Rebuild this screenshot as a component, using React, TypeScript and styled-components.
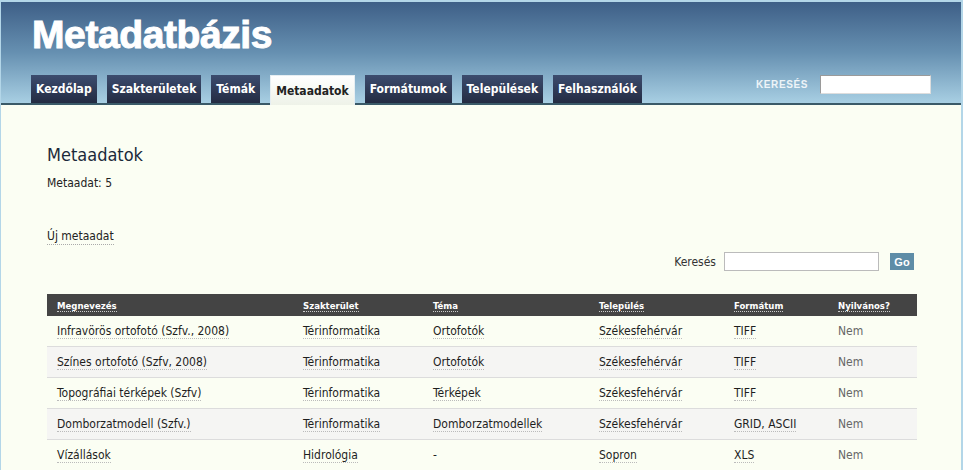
import * as React from 'react';
import styled, { createGlobalStyle } from 'styled-components';

const GlobalStyle = createGlobalStyle`
  html, body {
    margin: 0;
    padding: 0;
    background-color: #b3d6e8;
  }
  body {
    font-family: "DejaVu Sans Condensed", "Liberation Sans", Arial, sans-serif;
    color: #222;
  }
`;

const Page = styled.div`
  margin: 2px 2px 0 1px;
  background-color: #fbfef3;
  min-height: 468px;
`;

const Header = styled.div`
  height: 101px;
  background: linear-gradient(to bottom, #3e5f87 0%, #6690b1 50%, #a8cfe3 100%);
  border-bottom: 2px solid #3a5a68;
  display: flex;
  flex-direction: column;
  justify-content: space-between;
  padding: 0 30px;
`;

const SiteTitle = styled.h1`
  margin: 0;
  padding-top: 13px;
  padding-left: 1px;
  font-family: "Liberation Sans", Arial, sans-serif;
  font-weight: bold;
  font-size: 39px;
  line-height: 40px;
  letter-spacing: -0.4px;
  color: #fff;
  -webkit-text-stroke: 1px #fff;
`;

const NavBar = styled.div`
  display: flex;
  align-items: flex-end;
  justify-content: space-between;
`;

const Tabs = styled.ul`
  display: flex;
  gap: 10px;
  margin: 0;
  padding: 0;
  list-style: none;
`;

const Tab = styled.li<{ $active?: boolean }>`
  padding: 0 5px;
  display: flex;
  align-items: center;
  font-size: 12px;
  font-weight: bold;
  color: ${p => (p.$active ? '#222' : '#fff')};
  background: ${p =>
    p.$active
      ? 'linear-gradient(to bottom, #ffffff, #eef2e8)'
      : 'linear-gradient(to bottom, #3c4c6e, #232b42)'};
  border: ${p => (p.$active ? '1px solid #e6eef2' : '0')};
  border-bottom: 0;
  margin-bottom: ${p => (p.$active ? '-2px' : '0')};
  height: ${p => (p.$active ? '30px' : '28px')};
  box-sizing: border-box;
`;

const HeadSearch = styled.div`
  display: flex;
  align-items: center;
  gap: 12px;
  margin-bottom: 9px;
`;

const HeadLabel = styled.span`
  font-family: "Liberation Sans", Arial, sans-serif;
  font-size: 10px;
  font-weight: bold;
  letter-spacing: 0.6px;
  color: #eef4f8;
  text-transform: uppercase;
`;

const HeadInput = styled.input`
  width: 111px;
  height: 19px;
  box-sizing: border-box;
  border: 1px solid #9a9a9a;
  border-right-color: #ddd;
  border-bottom-color: #ddd;
  background: #fff;
  padding: 0;
`;

const Content = styled.div`
  padding: 38px 47px 0 46px;
`;

const PageTitle = styled.h2`
  margin: 0;
  font-size: 18px;
  font-weight: normal;
  color: #1b2a3a;
  line-height: 24px;
`;

const Count = styled.p`
  margin: 9px 0 0;
  font-size: 12px;
`;

const ActionLink = styled.a`
  display: inline-block;
  margin-top: 39px;
  font-size: 12px;
  color: #222;
  text-decoration: none;
  border-bottom: 1px dotted #aaa;
  padding-bottom: 1px;
`;

const SearchRow = styled.form`
  display: flex;
  justify-content: flex-end;
  align-items: center;
  margin: 7px 0 0 0;
`;

const SearchLabel = styled.label`
  font-size: 12px;
  color: #333;
  margin-right: 8px;
`;

const SearchInput = styled.input`
  width: 155px;
  height: 19px;
  box-sizing: border-box;
  border: 1px solid #bbb;
  background: #fff;
  margin-right: 11px;
`;

const GoButton = styled.button`
  height: 17px;
  width: 24px;
  padding: 0;
  border: 0;
  background: #5e8da7;
  color: #fff;
  font-family: "Liberation Sans", Arial, sans-serif;
  font-weight: bold;
  font-size: 11px;
`;

const Table = styled.table`
  margin-top: 23px;
  width: 870px;
  border-collapse: collapse;
  table-layout: fixed;
`;

const Th = styled.th<{ $w: number }>`
  width: ${p => p.$w}px;
  height: 22px;
  padding: 0 0 0 10px;
  background: #444;
  text-align: left;
  font-size: 9.5px;
  font-weight: bold;
  color: #fff;
  box-sizing: border-box;
`;

const HeadLink = styled.span`
  border-bottom: 1px dotted #ccc;
`;

const Row = styled.tr<{ $alt: boolean }>`
  background: ${p => (p.$alt ? '#f5f5f3' : 'transparent')};
  border-bottom: 1px solid #dcdcdc;
`;

const Td = styled.td<{ $muted?: boolean }>`
  height: 30px;
  padding: 0 0 0 10px;
  font-size: 12px;
  color: ${p => (p.$muted ? '#666' : '#222')};
`;

const CellLink = styled.a`
  color: #1e1e1e;
  text-decoration: none;
  border-bottom: 1px dotted #bbb;
`;

const columns: [string, number][] = [
  ['Megnevezés', 246],
  ['Szakterület', 130],
  ['Téma', 166],
  ['Település', 135],
  ['Formátum', 104],
  ['Nyilvános?', 89],
];

const rows = [
  ['Infravörös ortofotó (Szfv., 2008)', 'Térinformatika', 'Ortofotók', 'Székesfehérvár', 'TIFF'],
  ['Színes ortofotó (Szfv, 2008)', 'Térinformatika', 'Ortofotók', 'Székesfehérvár', 'TIFF'],
  ['Topográfiai térképek (Szfv)', 'Térinformatika', 'Térképek', 'Székesfehérvár', 'TIFF'],
  ['Domborzatmodell (Szfv.)', 'Térinformatika', 'Domborzatmodellek', 'Székesfehérvár', 'GRID, ASCII'],
  ['Vízállások', 'Hidrológia', '-', 'Sopron', 'XLS'],
];

const tabs = ['Kezdőlap', 'Szakterületek', 'Témák', 'Metaadatok', 'Formátumok', 'Települések', 'Felhasználók'];

const App: React.FC = () => {
  return (
    <>
      <GlobalStyle />
      <Page>
        <Header>
          <SiteTitle>Metadatbázis</SiteTitle>
          <NavBar>
            <Tabs>
              {tabs.map(t => (
                <Tab key={t} $active={t === 'Metaadatok'}>{t}</Tab>
              ))}
            </Tabs>
            <HeadSearch>
              <HeadLabel>Keresés</HeadLabel>
              <HeadInput type="text" />
            </HeadSearch>
          </NavBar>
        </Header>
        <Content>
          <PageTitle>Metaadatok</PageTitle>
          <Count>Metaadat: 5</Count>
          <ActionLink href="#">Új metaadat</ActionLink>
          <SearchRow onSubmit={e => e.preventDefault()}>
            <SearchLabel>Keresés</SearchLabel>
            <SearchInput type="text" />
            <GoButton type="submit">Go</GoButton>
          </SearchRow>
          <Table>
            <thead>
              <tr>
                {columns.map(([name, w]) => (
                  <Th key={name} $w={w}><HeadLink>{name}</HeadLink></Th>
                ))}
              </tr>
            </thead>
            <tbody>
              {rows.map((r, i) => (
                <Row key={r[0]} $alt={i % 2 === 1}>
                  {r.map((c, j) => (
                    <Td key={j}>{c === '-' ? c : <CellLink href="#">{c}</CellLink>}</Td>
                  ))}
                  <Td $muted>Nem</Td>
                </Row>
              ))}
            </tbody>
          </Table>
        </Content>
      </Page>
    </>
  );
};

export default App;
